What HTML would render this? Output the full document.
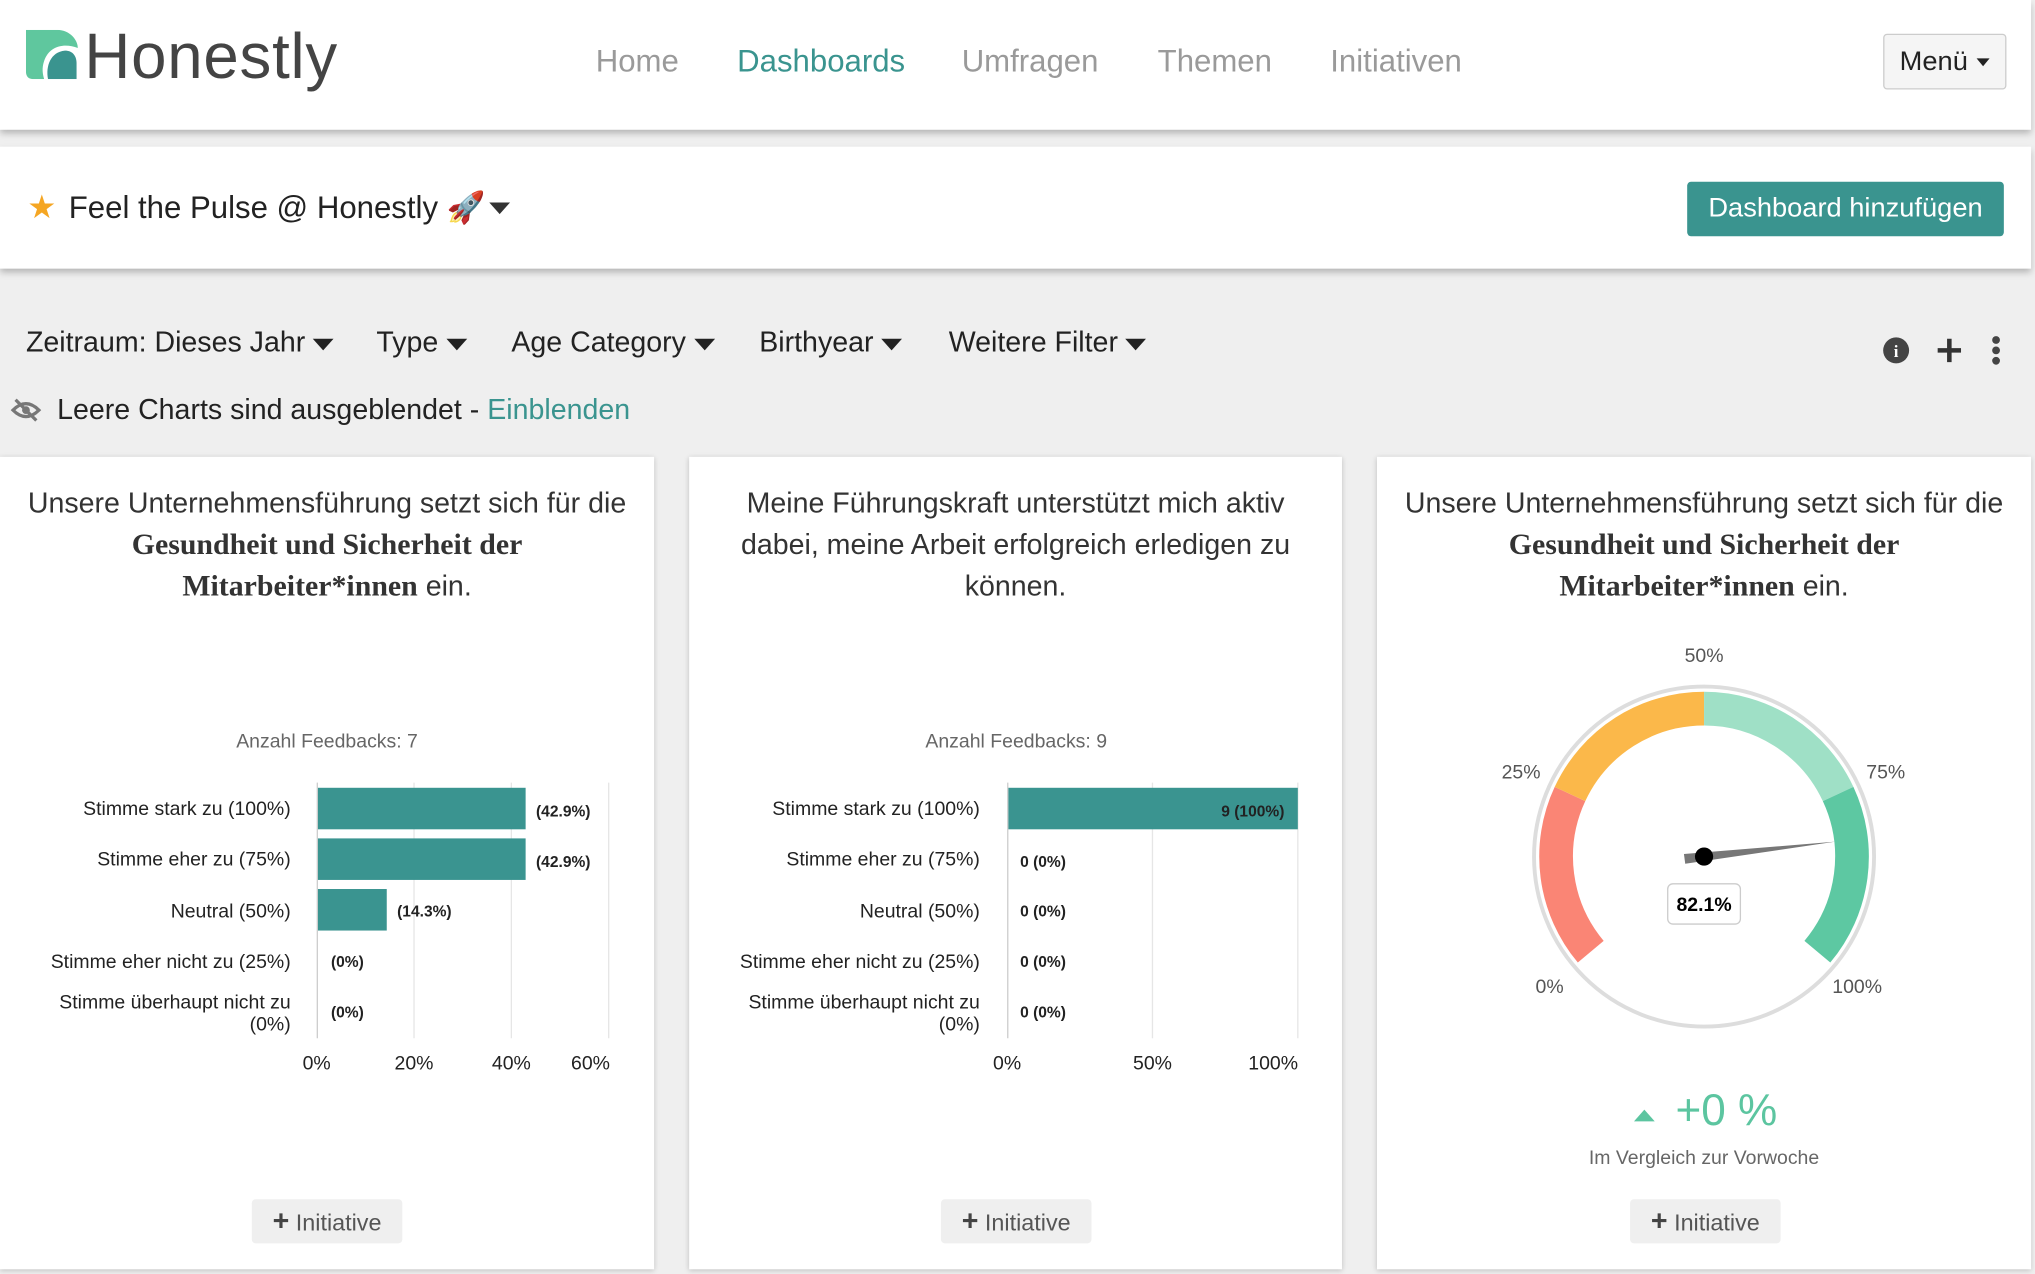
<!DOCTYPE html>
<html><head><meta charset="utf-8">
<style>
html,body{margin:0;padding:0;width:2035px;height:1274px;overflow:hidden;background:#efefef;}
#w{position:absolute;left:0;top:0;width:1568px;height:982px;transform:scale(1.29783);transform-origin:0 0;font-family:"Liberation Sans",sans-serif;background:#efefef;}
.a{position:absolute;white-space:nowrap;}
.hdr{position:absolute;left:0;top:0;width:1565px;height:100px;background:#fff;box-shadow:0 3px 5px rgba(0,0,0,.25);}
.bar2{position:absolute;left:0;top:113px;width:1565px;height:94px;background:#fff;box-shadow:0 3px 5px rgba(0,0,0,.25);}
.nav{font-size:24px;color:#9a9a9a;top:34px;}
.card{position:absolute;top:352px;height:626px;background:#fff;box-shadow:0 1px 4px rgba(0,0,0,.2);}
.t{position:absolute;left:0;right:0;text-align:center;font-size:22px;line-height:32px;color:#333;top:372px;}
.t b{font-family:"Liberation Serif",serif;font-size:23px;}
.flt{font-size:22px;color:#222;top:251px;}
.car{display:inline-block;width:0;height:0;border-left:8px solid transparent;border-right:8px solid transparent;border-top:9px solid #222;vertical-align:middle;margin-left:6px;}
.ini{position:absolute;top:924px;width:116px;height:34px;background:#efefef;border-radius:3px;font-size:18px;color:#555;text-align:center;line-height:34px;}
.ini b{font-size:22px;color:#444;margin-right:5px;}
</style></head><body><div id="w">
<div class="hdr"></div>
<svg class="a" style="left:20px;top:23px" width="40" height="38" viewBox="0 0 40 38"><path d="M0 0H24C34 0 40 8 40 14 30 10 18 12 14 24 12 30 13 34 14 38H6C2 38 0 36 0 32Z" fill="#5fc79e"/><path d="M17 38C15 28 19 17 30 16 36 16 39 20 39 26V38Z" fill="#3a948f"/></svg>
<div class="a" style="left:65px;top:16px;font-size:49px;color:#444;letter-spacing:0.6px">Honestly</div>
<div class="a nav" style="left:459px">Home</div>
<div class="a nav" style="left:568px;color:#3a948f">Dashboards</div>
<div class="a nav" style="left:741px">Umfragen</div>
<div class="a nav" style="left:892px">Themen</div>
<div class="a nav" style="left:1025px">Initiativen</div>
<div class="a" style="left:1451px;top:26px;width:93px;height:41px;background:#f5f5f5;border:1px solid #ccc;border-radius:3px;font-size:21px;line-height:41px;color:#222;text-align:center">Menü<span class="car" style="border-top-color:#222;border-width:6px 5px 0;margin-left:7px"></span></div>
<div class="bar2"></div>
<div class="a" style="left:21px;top:145px;font-size:25px;color:#f5a623">★</div>
<div class="a" style="left:53px;top:146px;font-size:24px;color:#222">Feel the Pulse @ Honestly 🚀</div>
<div class="a" style="left:377px;top:156px;width:0;height:0;border-left:8px solid transparent;border-right:8px solid transparent;border-top:9px solid #333"></div>
<div class="a" style="left:1300px;top:140px;width:244px;height:42px;background:#3a948f;border-radius:3px;color:#fff;font-size:21px;line-height:42px;text-align:center">Dashboard hinzufügen</div>
<div class="a flt" style="left:20px">Zeitraum: Dieses Jahr<span class="car"></span></div>
<div class="a flt" style="left:290px">Type<span class="car"></span></div>
<div class="a flt" style="left:394px">Age Category<span class="car"></span></div>
<div class="a flt" style="left:585px">Birthyear<span class="car"></span></div>
<div class="a flt" style="left:731px">Weitere Filter<span class="car"></span></div>
<svg class="a" style="left:1450px;top:258px" width="100" height="24"><circle cx="11" cy="12" r="10" fill="#444"/><text x="11" y="17" font-size="13" font-weight="bold" fill="#fff" text-anchor="middle" font-family="Liberation Serif">i</text><path d="M52 3V21M43 12H61" stroke="#333" stroke-width="3.5"/><circle cx="88" cy="4" r="3" fill="#444"/><circle cx="88" cy="12" r="3" fill="#444"/><circle cx="88" cy="20" r="3" fill="#444"/></svg>
<svg class="a" style="left:8px;top:306px" width="24" height="20"><path d="M2 10Q12 0 22 10Q12 20 2 10Z" fill="none" stroke="#777" stroke-width="2.5"/><circle cx="12" cy="10" r="3" fill="#777"/><path d="M4 2L20 18" stroke="#777" stroke-width="2.5"/></svg>
<div class="a" style="left:44px;top:303px;font-size:22px;color:#222">Leere Charts sind ausgeblendet - <span style="color:#3a948f">Einblenden</span></div>

<div class="card" style="left:0;width:504px"></div>
<div class="card" style="left:531px;width:503px"></div>
<div class="card" style="left:1061px;width:504px"></div>
<div class="t" style="left:0;width:504px">Unsere Unternehmensführung setzt sich für die<br><b>Gesundheit und Sicherheit der</b><br><b>Mitarbeiter*innen</b> ein.</div>
<div class="t" style="left:531px;width:503px">Meine Führungskraft unterstützt mich aktiv<br>dabei, meine Arbeit erfolgreich erledigen zu<br>können.</div>
<div class="t" style="left:1061px;width:504px">Unsere Unternehmensführung setzt sich für die<br><b>Gesundheit und Sicherheit der</b><br><b>Mitarbeiter*innen</b> ein.</div>

<svg class="a" style="left:0;top:0" width="1568" height="982" font-family="Liberation Sans, sans-serif">
<g font-size="15" fill="#666" text-anchor="middle"><text x="252" y="576">Anzahl Feedbacks: 7</text><text x="783" y="576">Anzahl Feedbacks: 9</text></g>
<g stroke="#e6e6e6" stroke-width="1"><path d="M319 603V800M394 603V800M469 603V800M888 603V800M1000 603V800"/></g>
<path d="M244.5 603V800M776.5 603V800" stroke="#ccc"/>
<g fill="#3a9490"><rect x="245" y="607" width="160" height="32"/><rect x="245" y="646" width="160" height="32"/><rect x="245" y="685" width="53" height="32"/><rect x="777" y="607" width="223" height="32"/></g>
<g font-size="15" fill="#222" text-anchor="end">
<text x="224" y="628">Stimme stark zu (100%)</text><text x="224" y="667">Stimme eher zu (75%)</text><text x="224" y="707">Neutral (50%)</text><text x="224" y="746">Stimme eher nicht zu (25%)</text><text x="224" y="777">Stimme überhaupt nicht zu</text><text x="224" y="794">(0%)</text>
<text x="755" y="628">Stimme stark zu (100%)</text><text x="755" y="667">Stimme eher zu (75%)</text><text x="755" y="707">Neutral (50%)</text><text x="755" y="746">Stimme eher nicht zu (25%)</text><text x="755" y="777">Stimme überhaupt nicht zu</text><text x="755" y="794">(0%)</text>
</g>
<g font-size="12" font-weight="bold" fill="#222">
<text x="413" y="629">(42.9%)</text><text x="413" y="668">(42.9%)</text><text x="306" y="706">(14.3%)</text><text x="255" y="745">(0%)</text><text x="255" y="784">(0%)</text>
<text x="941" y="629">9 (100%)</text><text x="786" y="668">0 (0%)</text><text x="786" y="706">0 (0%)</text><text x="786" y="745">0 (0%)</text><text x="786" y="784">0 (0%)</text>
</g>
<g font-size="15" fill="#222" text-anchor="middle"><text x="244" y="824">0%</text><text x="319" y="824">20%</text><text x="394" y="824">40%</text><text x="455" y="824">60%</text><text x="776" y="824">0%</text><text x="888" y="824">50%</text><text x="981" y="824">100%</text></g>
<circle cx="1313" cy="660" r="131" fill="none" stroke="#ddd" stroke-width="3"/>
<g fill="none" stroke-width="26">
<path d="M1225.7 733.3A114 114 0 0 1 1209.7 611.8" stroke="#fa8575"/>
<path d="M1209.7 611.8A114 114 0 0 1 1313 546" stroke="#fbb84a"/>
<path d="M1313 546A114 114 0 0 1 1416.3 611.8" stroke="#9fe0c6"/>
<path d="M1416.3 611.8A114 114 0 0 1 1400.3 733.3" stroke="#5dc8a2"/>
</g>
<polygon points="1414.3,648.5 1297.5,658 1298.5,665.5" fill="#777"/>
<circle cx="1313" cy="660" r="7" fill="#000"/>
<g font-size="15" fill="#555" text-anchor="middle"><text x="1313" y="510">50%</text><text x="1172" y="600">25%</text><text x="1453" y="600">75%</text><text x="1194" y="765">0%</text><text x="1431" y="765">100%</text></g>
<rect x="1285" y="681" width="56" height="31" rx="4" fill="#fff" stroke="#ccc"/>
<text x="1313" y="702" font-size="15" font-weight="bold" text-anchor="middle" fill="#000">82.1%</text>
<polygon points="1259,864 1275,864 1267,855" fill="#5cc5a0"/>
<text x="1291" y="867" font-size="34" fill="#5cc5a0">+0 %</text>
<text x="1313" y="897" font-size="15" fill="#666" text-anchor="middle">Im Vergleich zur Vorwoche</text>
</svg>
<div class="ini" style="left:194px"><b>+</b>Initiative</div>
<div class="ini" style="left:725px"><b>+</b>Initiative</div>
<div class="ini" style="left:1256px"><b>+</b>Initiative</div>
</div></body></html>
